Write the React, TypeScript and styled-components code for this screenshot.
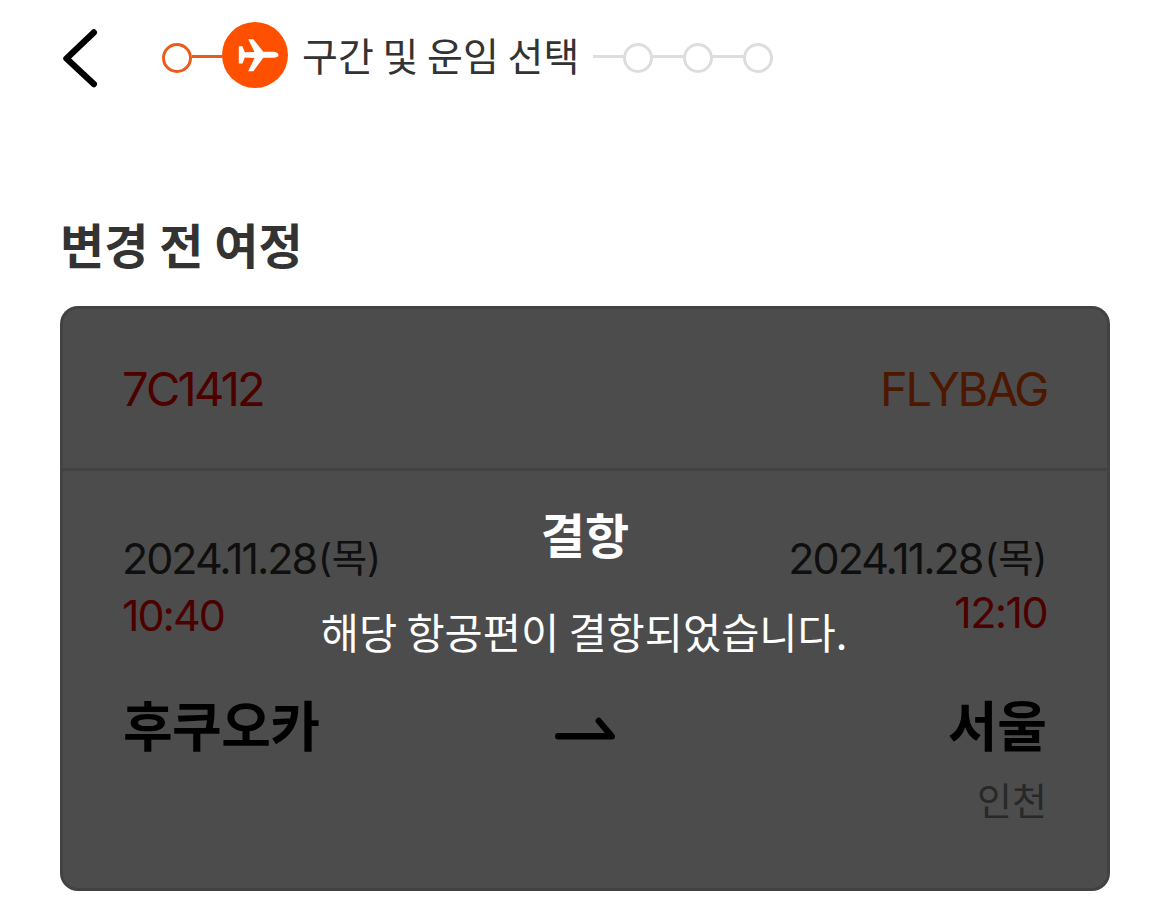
import React from 'react';
import styled, { createGlobalStyle } from 'styled-components';

const GlobalStyle = createGlobalStyle`
  * {
    box-sizing: border-box;
  }

  body {
    margin: 0;
    background: #fff;
    color: #333;
    font-family: Inter, 'Noto Sans CJK KR', sans-serif;
    overflow: hidden;
  }
`;

interface TextProps {
  $size: number;
  $line: number;
  $color?: string;
  $weight?: number;
  $spacing?: number;
  $korean?: boolean;
}

const Text = styled.div<TextProps>`
  color: ${({ $color }) => $color || '#333'};
  font-family: ${({ $korean }) => $korean ? "'Noto Sans CJK KR', sans-serif" : "Inter, 'Noto Sans CJK KR', sans-serif"};
  font-size: ${({ $size }) => $size}px;
  font-weight: ${({ $weight }) => $weight || 400};
  letter-spacing: ${({ $spacing }) => $spacing || 0}px;
  line-height: ${({ $line }) => $line}px;
  white-space: nowrap;
`;

const Page = styled.main`
  width: 1170px;
  height: 919px;
  padding: 0 60px;
`;

const Header = styled.header`
  display: flex;
  align-items: center;
  height: 116px;
`;

const BackButton = styled.button`
  display: flex;
  width: 42px;
  height: 64px;
  margin-right: 60px;
  padding: 0;
  border: 0;
  background: none;
`;

const Steps = styled.div`
  display: flex;
  align-items: center;
`;

const Dot = styled.span<{ $done?: boolean }>`
  width: 30px;
  height: 30px;
  border: 3px solid ${({ $done }) => $done ? '#ea5b1b' : '#ddd'};
  border-radius: 50%;
`;

const Line = styled.span<{ $done?: boolean }>`
  width: 30px;
  height: 3px;
  margin-bottom: 3px;
  background: ${({ $done }) => $done ? '#ea5b1b' : '#ddd'};
`;

const Current = styled.span`
  display: flex;
  width: 66px;
  height: 66px;
  margin: 0 14px 6px 0;
  border-radius: 50%;
  background: #ff5000;
`;

const StepName = styled(Text)`
  width: 277px;
  margin: 0 14px 8px 0;
`;

const Title = styled.h1`
  margin: 93px 0 0;
  height: 97px;
`;

const Card = styled.section`
  position: relative;
  border-radius: 18px;
  overflow: hidden;
`;

const CardBody = styled.div`
  height: 585px;
  border: 3px solid #ddd;
  border-radius: 18px;
  background: #fff;
`;

const CardTop = styled.div`
  display: flex;
  justify-content: space-between;
  height: 162px;
  padding: 50px 60px 0 59px;
  border-bottom: 3px solid #ddd;
`;

const Journey = styled.div`
  display: grid;
  grid-template-columns: 1fr 60px 1fr;
  padding: 57px 60px 0;
`;

const Stop = styled.div<{ $end?: boolean }>`
  display: flex;
  flex-direction: column;
  align-items: ${({ $end }) => $end ? 'flex-end' : 'flex-start'};
`;

const Day = styled.span`
  margin-left: 2px;
  font-size: 38.5px;
  letter-spacing: -0.3px;
  line-height: 1;
  vertical-align: 2px;
`;

const DateText = styled(Text)`
  height: 60px;
  margin-left: -1px;
`;

const Time = styled(Text)<{ $gap: number }>`
  margin: 0 0 ${({ $gap }) => $gap}px -1px;
`;

const Airport = styled(Text)`
  margin-top: 3px;
`;

const ArrowIcon = styled.svg`
  margin-top: 188px;
`;

// dims the whole card, border included
const Overlay = styled.div`
  position: absolute;
  inset: 0;
  display: flex;
  flex-direction: column;
  align-items: center;
  padding-top: 193px;
  background: rgba(0, 0, 0, 0.7);
`;

const Message = styled(Text)`
  margin: 34px 2px 0 0;
`;

function App (): React.ReactElement {
  return (
    <>
      <GlobalStyle />
      <Page>
        <Header>
          <BackButton aria-label='뒤로'>
            <svg width='42' height='64' viewBox='0 0 42 64' fill='none'>
              <path d='M33.8 6.5 L6.5 32.5 L33.8 58' stroke='#000' strokeWidth='6.4' strokeLinecap='round' strokeLinejoin='round' />
            </svg>
          </BackButton>
          <Steps>
            <Dot $done />
            <Line $done />
            <Current>
              <svg width='66' height='66' viewBox='0 0 66 66' fill='#fff'>
                <path d='M16.8 24.2H20.5L22.8 30.2L32.5 30L26.2 17.2H31.3L41.3 29.8H52Q56.5 30.8 56.5 33Q56.5 35 52 35.8H41.3L31.3 49.3H26.2L32.5 36L22.8 35.4L20.5 41.5H16.8V33Z' />
              </svg>
            </Current>
            <StepName $size={39} $line={56} $korean>구간 및 운임 선택</StepName>
            <Line />
            <Dot />
            <Line />
            <Dot />
            <Line />
            <Dot />
          </Steps>
        </Header>
        <Title>
          <Text as='span' $size={48} $line={68} $weight={700} $korean>변경 전 여정</Text>
        </Title>
        <Card>
          <CardBody>
            <CardTop>
              <Text $size={47} $line={60} $color='#f00' $spacing={-2.7}>7C1412</Text>
              <Text $size={47} $line={60} $color='#ff5000' $spacing={-2.4}>FLYBAG</Text>
            </CardTop>
            <Journey>
              <Stop>
                <DateText $size={43} $line={60} $spacing={-2}>2024.11.28<Day>(목)</Day></DateText>
                <Time $size={43} $line={54} $color='#f00' $spacing={-2} $gap={46}>10:40</Time>
                <Text $size={54} $line={72} $weight={700} $color='#000' $spacing={-0.6} $korean>후쿠오카</Text>
              </Stop>
              <ArrowIcon width='60' height='24' viewBox='0 0 60 24' fill='none'>
                <path d='M3.2 20.3H56.8L43.8 5' stroke='#000' strokeWidth='6.4' strokeLinecap='round' strokeLinejoin='round' />
              </ArrowIcon>
              <Stop $end>
                <DateText $size={43} $line={60} $spacing={-2}>2024.11.28<Day>(목)</Day></DateText>
                <Time $size={43} $line={48} $color='#f00' $spacing={-1.6} $gap={52}>12:10</Time>
                <Text $size={54} $line={72} $weight={700} $color='#000' $korean>서울</Text>
                <Airport $size={38} $line={72} $color='#888' $korean>인천</Airport>
              </Stop>
            </Journey>
          </CardBody>
          <Overlay>
            <Text $size={48} $line={68} $weight={700} $color='#fff' $korean>결항</Text>
            <Message $size={41.5} $line={60} $color='#fff' $korean>해당 항공편이 결항되었습니다.</Message>
          </Overlay>
        </Card>
      </Page>
    </>
  );
}

export default App;
